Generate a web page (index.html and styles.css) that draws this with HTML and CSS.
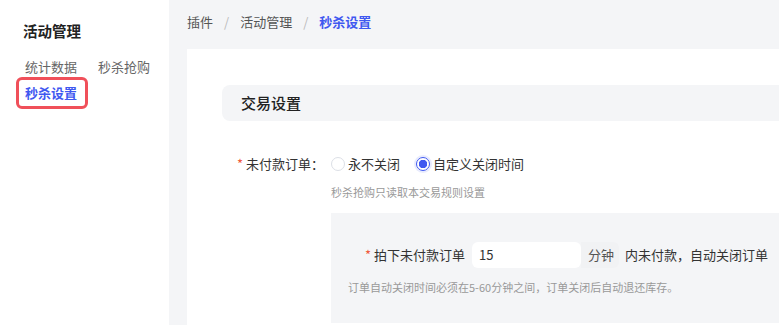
FILE: index.html
```html
<!DOCTYPE html>
<html lang="zh-CN">
<head>
<meta charset="utf-8" />
<title>秒杀设置</title>
<link rel="stylesheet" href="styles.css">
</head>
<body>
<div class="layout">
  <aside class="side">
    <h2 class="side-title">活动管理</h2>
    <nav class="side-nav">
      <a class="side-link">统计数据</a>
      <a class="side-link">秒杀抢购</a>
      <a class="side-link active">秒杀设置</a>
    </nav>
  </aside>
  <main class="main">
    <div class="crumbs">
      <span>插件</span>
      <span class="sep">/</span>
      <span>活动管理</span>
      <span class="sep">/</span>
      <span class="current">秒杀设置</span>
    </div>
    <section class="panel">
      <div class="block-head">交易设置</div>

      <div class="form-item">
        <label class="form-label"><i class="req">*</i>未付款订单：</label>
        <div class="radios">
          <span class="radio"><span class="dot"></span>永不关闭</span>
          <span class="radio checked"><span class="dot"></span>自定义关闭时间</span>
        </div>
      </div>
      <p class="tip tip-main">秒杀抢购只读取本交易规则设置</p>

      <div class="sub-box">
        <div class="sub-row">
          <label class="sub-label"><i class="req">*</i>拍下未付款订单</label>
          <span class="input">15</span>
          <span class="addon">分钟</span>
          <span class="after">内未付款，自动关闭订单</span>
        </div>
        <p class="tip tip-sub">订单自动关闭时间必须在5-60分钟之间，订单关闭后自动退还库存。</p>
      </div>
    </section>
  </main>
</div>
</body>
</html>
```

FILE: styles.css
```css
body {
  margin: 0;
  font: normal 13px/20px "Noto Sans CJK SC", "Liberation Sans", sans-serif;
  color: #333;
  background: #fff;
  overflow: hidden;
}

.layout {
  display: flex;
  height: 325px;
}

/* sidebar */
.side {
  width: 169px;
  flex: none;
  padding: 21px 0 0 23px;
  box-sizing: border-box;
  background: #fff;
}

.side-title {
  margin: 0;
  font-size: 14.5px;
  line-height: 20px;
  font-weight: 700;
  color: #222;
}

.side-nav {
  display: flex;
  flex-wrap: wrap;
  column-gap: 21px;
  row-gap: 6px;
  margin-top: 16px;
  padding-left: 2px;
}

.side-link {
  color: #666;
  line-height: 20px;
}

.side-link.active {
  position: relative;
  color: #3f58f0;
  font-weight: 700;
}

.side-link.active::after {
  content: "";
  position: absolute;
  left: -9px;
  right: -11px;
  top: -6px;
  bottom: -6px;
  border: 3px solid #f0505a;
  border-radius: 6px;
}

/* main */
.main {
  flex: 1;
  display: flex;
  flex-direction: column;
  background: #f4f5f7;
  padding-left: 18px;
  overflow: hidden;
}

.crumbs {
  height: 49px;
  padding-top: 12px;
  box-sizing: border-box;
  color: #555;
  display: flex;
}

.crumbs .sep {
  color: #bbb;
  margin: 0 11px;
}

.crumbs .current {
  color: #3f58f0;
  font-weight: 700;
}

.panel {
  flex: 1;
  background: #fff;
  padding: 36px 0 0 35px;
}

.block-head {
  height: 36px;
  line-height: 36px;
  margin-right: -20px;
  padding-left: 19px;
  background: #f4f5f7;
  border-radius: 8px;
  font-size: 15px;
  font-weight: 500;
  color: #222;
}

.form-item {
  display: flex;
  align-items: center;
  height: 32px;
  margin-top: 27px;
}

.form-label {
  width: 109px;
  padding-right: 7px;
  box-sizing: border-box;
  text-align: right;
}

.req {
  font-style: normal;
  color: #f05a3c;
  margin-right: 4px;
}

.radios {
  display: flex;
  gap: 16px;
}

.radio {
  display: flex;
  align-items: center;
}

.radio .dot {
  width: 14px;
  height: 14px;
  box-sizing: border-box;
  border: 1px solid #dcdfe6;
  border-radius: 50%;
  margin-right: 3px;
}

.radio.checked .dot {
  border-color: #3f58f0;
  background: radial-gradient(circle, #3f58f0 0 4px, #fff 4.5px);
  box-shadow: 0 0 0 2px rgba(63, 88, 240, 0.12);
}

.tip {
  margin: 0;
  font-size: 11px;
  line-height: 17px;
  color: #999;
}

.tip-main {
  margin: 4px 0 0 109px;
}

.sub-box {
  margin: 12px -20px 0 109px;
  padding: 29px 0 27px 34px;
  background: #f4f5f7;
}

.sub-row {
  display: flex;
  align-items: center;
  height: 26px;
}

.sub-label {
  margin-right: 7px;
}

.req {
  margin-right: 3px;
}

.input {
  width: 109px;
  height: 26px;
  line-height: 26px;
  padding-left: 7px;
  box-sizing: border-box;
  background: #fff;
  border-radius: 6px;
}

.addon {
  height: 26px;
  line-height: 26px;
  padding: 0 5px 0 7px;
  background: #f1f2f4;
  border-radius: 0 6px 6px 0;
  color: #555;
}

.after {
  margin-left: 6px;
}

.tip-sub {
  margin: 11px 0 0 -17px;
}
```
